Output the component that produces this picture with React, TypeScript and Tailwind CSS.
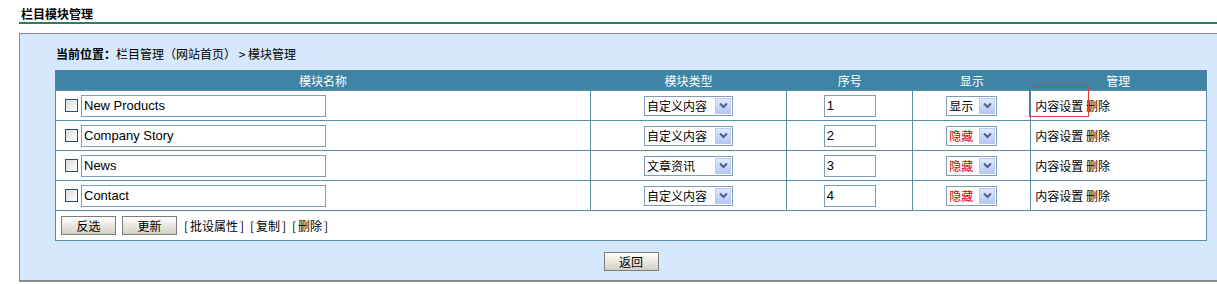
import React from "react";

const cjk = '"Noto Sans CJK SC", "Liberation Sans", sans-serif';

function Arrow() {
  return (
    <span className="flex h-[16px] w-[16px] items-center justify-center border border-[#b9c9ef] bg-gradient-to-b from-[#e1eafe] to-[#b4c8f6]">
      <svg width="9" height="7" viewBox="0 0 9 7">
        <path d="M1 1.5 L4.5 5 L8 1.5" stroke="#4d6185" strokeWidth="2" fill="none" />
      </svg>
    </span>
  );
}

function Select({ label, w, red }: { label: string; w: number; red?: boolean }) {
  return (
    <div
      className="mx-auto flex h-[20px] items-center justify-between border border-[#7f9db9] bg-white pl-[2px] pr-[1px]"
      style={{ width: w }}
    >
      <span className={`text-[12px] leading-[16px] ${red ? "text-[#e00000]" : "text-black"}`}>{label}</span>
      <Arrow />
    </div>
  );
}

function Btn({ label }: { label: string }) {
  return (
    <button className="h-[19px] w-[55px] border border-[#7c7c7c] bg-gradient-to-b from-[#ffffff] to-[#d5cfc4] text-[12px] leading-[16px] text-black">
      {label}
    </button>
  );
}

function Bracket({ label }: { label: string }) {
  return (
    <span className="flex">
      <span className="w-[6px]">[</span>
      {label}
      <span className="w-[6px] text-right">]</span>
    </span>
  );
}

const rows = [
  { name: "New Products", type: "自定义内容", n: "1", show: "显示" },
  { name: "Company Story", type: "自定义内容", n: "2", show: "隐藏" },
  { name: "News", type: "文章资讯", n: "3", show: "隐藏" },
  { name: "Contact", type: "自定义内容", n: "4", show: "隐藏" },
];

export default function App() {
  return (
    <div className="w-[1217px] h-[284px] overflow-hidden bg-white text-black" style={{ fontFamily: cjk }}>
      <div className="pl-[19px] pt-[6px]">
        <div className="pl-[2px] text-[12px] font-bold leading-[16px]">栏目模块管理</div>
        <div className="h-[2px] bg-[#27805e]" />
        <div className="mt-[9px] border-l border-t border-b-2 border-[#8a8a8a] bg-[#d5e8fc] pb-[9px]">
          <div className="pl-[36px] pt-[12px] text-[12px] leading-[16px]">
            <span className="font-bold">当前位置：</span>栏目管理（网站首页） &gt; 模块管理
          </div>
          <table className="ml-[35px] mt-[8px] w-[1152px] border-collapse border border-[#4d84a2] bg-white text-[12px]">
            <colgroup>
              <col style={{ width: 535 }} />
              <col style={{ width: 197 }} />
              <col style={{ width: 126 }} />
              <col style={{ width: 118 }} />
              <col style={{ width: 176 }} />
            </colgroup>
            <thead>
              <tr className="h-[20px] bg-[#3f84a5] text-white">
                <th className="p-0 font-normal leading-[16px]">模块名称</th>
                <th className="p-0 font-normal leading-[16px]">模块类型</th>
                <th className="p-0 font-normal leading-[16px]">序号</th>
                <th className="p-0 font-normal leading-[16px]">显示</th>
                <th className="p-0 font-normal leading-[16px]">管理</th>
              </tr>
            </thead>
            <tbody>
              {rows.map((r, i) => (
                <tr key={r.name} className="h-[30px]">
                  <td className="border border-[#5b8eaa] p-0">
                    <div className="flex items-center pl-[9px]">
                      <span className="h-[13px] w-[13px] border border-[#1c5180] bg-gradient-to-br from-[#dcdcd7] to-[#ffffff]" />
                      <div
                        className="ml-[3px] flex h-[22px] w-[245px] items-center border border-[#7f9db9] bg-white pl-[2px] text-[13px] text-black"
                        style={{ fontFamily: '"Liberation Sans", Arial, sans-serif' }}
                      >
                        {r.name}
                      </div>
                    </div>
                  </td>
                  <td className="border border-[#5b8eaa] p-0">
                    <Select label={r.type} w={89} />
                  </td>
                  <td className="border border-[#5b8eaa] p-0">
                    <div
                      className="mx-auto flex h-[22px] w-[52px] items-center border border-[#7f9db9] bg-white pl-[2px] text-[13px]"
                      style={{ fontFamily: '"Liberation Sans", Arial, sans-serif' }}
                    >
                      {r.n}
                    </div>
                  </td>
                  <td className="border border-[#5b8eaa] p-0">
                    <Select label={r.show} w={51} red={r.show === "隐藏"} />
                  </td>
                  <td className="relative border border-[#5b8eaa] p-0 pl-[4px] leading-[16px]">
                    内容设置 删除
                    {i === 0 && (
                      <div className="absolute left-[-2px] top-[-4px] h-[30px] w-[60px] border border-[#e03c3c]" />
                    )}
                  </td>
                </tr>
              ))}
              <tr className="h-[30px]">
                <td colSpan={5} className="border border-[#5b8eaa] p-0">
                  <div className="flex items-center gap-[6px] pl-[5px] leading-[16px]">
                    <Btn label="反选" />
                    <Btn label="更新" />
                    <span className="ml-[1px] flex gap-[6px]">
                      <Bracket label="批设属性" />
                      <Bracket label="复制" />
                      <Bracket label="删除" />
                    </span>
                  </div>
                </td>
              </tr>
            </tbody>
          </table>
          <div className="ml-[35px] mt-[11px] flex w-[1152px] justify-center">
            <Btn label="返回" />
          </div>
        </div>
      </div>
    </div>
  );
}
